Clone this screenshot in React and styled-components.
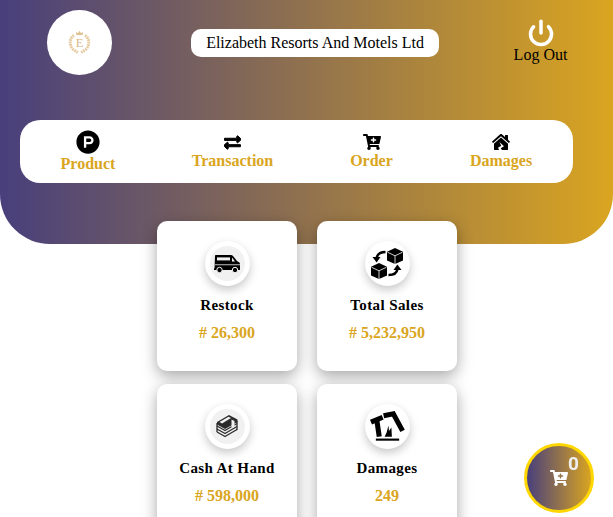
import React from 'react'
import styled, { createGlobalStyle } from 'styled-components'
import { FaProductHunt, FaExchangeAlt, FaCartPlus, FaHouseDamage } from 'react-icons/fa'
import { Power } from 'lucide-react'

const GlobalStyle = createGlobalStyle`
  html, body {
    margin: 0;
    height: 100%;
    overflow: hidden;
    background: #fff;
    font-family: "Liberation Serif", "Times New Roman", serif;
  }
`;

const VanIcon = () => (
  <svg width="26" height="18" viewBox="0 0 26 18">
    <path fill="#000" d="M1 1 C1 .4 1.4 0 2 0 H17 C17.8 0 18.4.3 19 .9 L23 6 L25 7.2 C25.7 7.7 26 8.3 26 9 V14 H.5 Z" />
    <rect x="3" y="2.4" width="13" height="3" fill="#f1f1f1" />
    <path fill="#f1f1f1" d="M18 2.6 L21 6.6 H18 Z" />
    <rect x="1" y="9.4" width="25" height=".8" fill="#f1f1f1" />
    <rect x="0" y="13.4" width="26" height="1.6" fill="#000" />
    <circle cx="5.5" cy="15" r="2.7" fill="#000" stroke="#f1f1f1" strokeWidth="1" />
    <circle cx="21" cy="15" r="2.7" fill="#000" stroke="#f1f1f1" strokeWidth="1" />
  </svg>
)

const Cube = ({ x, y }) => (
  <g transform={`translate(${x} ${y})`}>
    <path fill="#000" d="M8 0 L16 3.8 V12.6 L8 16 L0 12.6 V3.8 Z" />
    <path fill="none" stroke="#fff" strokeWidth=".8" d="M.5 4.2 L8 7.8 L15.5 4.2 M8 7.8 V16" />
  </g>
)

const CubesIcon = () => (
  <svg width="32" height="31" viewBox="0 0 32 31">
    <Cube x={16} y={0} />
    <Cube x={0} y={15} />
    <path fill="none" stroke="#000" strokeWidth="2.4" d="M14.5 4 C9 4 6 7 5.5 10.5" />
    <path fill="#000" d="M1.5 9 H9.5 L5.6 14.5 Z" />
    <path fill="none" stroke="#000" strokeWidth="2.4" d="M17.5 27 C23 27 26 24.5 26.5 21" />
    <path fill="#000" d="M22.5 22 H30.5 L26.4 16.5 Z" />
  </svg>
)

const CashIcon = () => (
  <svg width="22" height="23" viewBox="0 0 22 23">
    <g fill="none" stroke="#2b2b2b" strokeWidth="1.3" strokeLinejoin="round">
      <path d="M1 11 L9 15.5 L21 8.5" />
      <path d="M1 14 L9 18.5 L21 11.5" />
      <path d="M1 17 L9 21.5 L21 14.5" />
      <path d="M1 8 V17 M21 6 V15" />
    </g>
    <path fill="#2b2b2b" d="M1 7 L13 0 L21.5 4.5 V7 L9 14 L1 9.5 Z" />
    <path fill="#f1f1f1" d="M3.5 7 L12.5 1.8 L15 3.1 L6 8.4 Z" />
    <path fill="#f1f1f1" d="M15.5 4.5 L18.5 6.1 V11.5 L15.5 13.3 Z" />
  </svg>
)

const BrokenHouseIcon = () => (
  <svg width="36" height="31" viewBox="0 0 36 31">
    <g fill="none" stroke="#000" strokeWidth="5.2">
      <path d="M1 11 L13 6" />
      <path d="M7 9 L9.5 26" />
      <path d="M14 4.5 L24 2.5 L33.5 20" />
    </g>
    <path fill="#000" d="M15 26 L17 22 L19 14.5 L19.5 20 L22 16.5 L22.5 26 Z" />
    <path fill="none" stroke="#000" strokeWidth="2.2" d="M6 29 H30" />
  </svg>
)

const Crest = () => (
  <CrestSvg viewBox="0 0 30 30" width="25" height="25">
    <path fill="#dfc08f" d="M11 6 L11 2.5 L13.2 4 L15 1 L16.8 4 L19 2.5 L19 6 Z" />
    <g fill="none" stroke="#e5ca9f" strokeWidth="3.4" strokeDasharray="2.2 .8">
      <path d="M8.5 6.5 C3 9.5 2 18 7.5 23.5 L13 27" />
      <path d="M21.5 6.5 C27 9.5 28 18 22.5 23.5 L17 27" />
    </g>
    <text x="15" y="20" textAnchor="middle" fontSize="15" fill="#d9b884" fontFamily="Liberation Serif">E</text>
  </CrestSvg>
)

const tabs = [
  { label: 'Product', icon: <FaProductHunt size={24} />, big: true },
  { label: 'Transaction', icon: <FaExchangeAlt size={17} stroke="#000" strokeWidth={30} /> },
  { label: 'Order', icon: <FaCartPlus size={18} /> },
  { label: 'Damages', icon: <FaHouseDamage size={18} /> },
]

const stats = [
  { title: 'Restock', value: '# 26,300', icon: <VanIcon />, grey: true },
  { title: 'Total Sales', value: '# 5,232,950', icon: <CubesIcon /> },
  { title: 'Cash At Hand', value: '# 598,000', icon: <CashIcon />, grey: true },
  { title: 'Damages', value: '249', icon: <BrokenHouseIcon /> },
]

function App() {
  return (
    <Page>
      <GlobalStyle />
      <Header>
        <TopRow>
          <Logo><Crest /></Logo>
          <Title>Elizabeth Resorts And Motels Ltd</Title>
          <LogOut>
            <Power size={28} color="#fff" strokeWidth={3} />
            <span>Log Out</span>
          </LogOut>
        </TopRow>
        <Tabs>
          {tabs.map((tab) => (
            <Tab key={tab.label} $big={tab.big}>
              <TabIcon $big={tab.big}>{tab.icon}</TabIcon>
              <TabLabel>{tab.label}</TabLabel>
            </Tab>
          ))}
        </Tabs>
      </Header>

      <Cards>
        {stats.map((stat) => (
          <Card key={stat.title}>
            <IconCircle>
              <IconInner $grey={stat.grey}>{stat.icon}</IconInner>
            </IconCircle>
            <CardTitle>{stat.title}</CardTitle>
            <CardValue>{stat.value}</CardValue>
          </Card>
        ))}
      </Cards>

      <CartButton>
        <FaCartPlus size={18} color="#fff" />
        <CartCount>0</CartCount>
      </CartButton>
    </Page>
  )
}

export default App

const Page = styled.div`
  width: 613px;
`;

const Header = styled.header`
  height: 244px;
  box-sizing: border-box;
  padding: 10px 40px 0 20px;
  background: linear-gradient(90deg, #483f7c 0%, #daa520 100%);
  border-radius: 0 0 50px 50px;
`;

const TopRow = styled.div`
  display: grid;
  grid-template-columns: 171px 248px 1fr;
  align-items: start;
  height: 110px;
`;

const Logo = styled.div`
  width: 65px;
  height: 65px;
  margin-left: 27px;
  border-radius: 50%;
  background: #fff;
  display: flex;
  align-items: center;
  justify-content: center;
`;

const CrestSvg = styled.svg`
  display: block;
`;

const Title = styled.div`
  margin-top: 19px;
  height: 28px;
  line-height: 28px;
  text-align: center;
  background: #fff;
  border-radius: 10px;
  font-size: 16px;
  color: #000;
`;

const LogOut = styled.div`
  display: flex;
  flex-direction: column;
  align-items: center;
  padding: 9px 0 0 69px;
  color: #000;
  font-size: 16px;
  line-height: 18px;
  white-space: nowrap;

  svg {
    display: block;
    margin-bottom: -1px;
  }
`;

const Tabs = styled.nav`
  height: 63px;
  background: #fff;
  border-radius: 20px;
  display: grid;
  grid-template-columns: 136px 153px 125px 134px;
  align-items: start;
`;

const Tab = styled.div`
  display: flex;
  flex-direction: column;
  align-items: center;
  padding-top: ${(p) => (p.$big ? '10px' : '13px')};
`;

const TabIcon = styled.div`
  height: ${(p) => (p.$big ? '24px' : '18px')};
  display: flex;
  align-items: center;
  color: #000;
`;

const TabLabel = styled.div`
  font-size: 16px;
  line-height: 18px;
  margin-top: 1px;
  font-weight: 700;
  color: #daa520;
  white-space: nowrap;
`;

const Cards = styled.section`
  display: grid;
  grid-template-columns: 140px 140px;
  column-gap: 20px;
  row-gap: 13px;
  margin: -23px 0 0 157px;
`;

const Card = styled.div`
  height: 150px;
  box-sizing: border-box;
  padding-top: 20px;
  background: #fff;
  border-radius: 10px;
  box-shadow: 0 5px 15px rgba(0, 0, 0, 0.35);
  display: flex;
  flex-direction: column;
  align-items: center;
`;

const IconCircle = styled.div`
  width: 45px;
  height: 45px;
  border-radius: 50%;
  background: #fff;
  box-shadow: 0 4px 10px rgba(0, 0, 0, 0.22);
  display: flex;
  align-items: center;
  justify-content: center;
`;

const IconInner = styled.div`
  width: 35px;
  height: 35px;
  border-radius: 50%;
  background: ${(p) => (p.$grey ? '#f1f1f1' : '#fff')};
  display: flex;
  align-items: center;
  justify-content: center;
`;

const CardTitle = styled.div`
  margin-top: 10px;
  font-size: 15px;
  line-height: 18px;
  font-weight: 700;
  letter-spacing: 0.4px;
  color: #000;
`;

const CardValue = styled.div`
  margin-top: 10px;
  font-size: 16px;
  line-height: 18px;
  font-weight: 700;
  color: #daa520;
`;

const CartButton = styled.div`
  position: fixed;
  left: 524px;
  top: 443px;
  width: 70px;
  height: 70px;
  box-sizing: border-box;
  border: 3px solid #ffd700;
  border-radius: 50%;
  background: linear-gradient(90deg, #483f7c 0%, #daa520 100%);
  display: flex;
  align-items: center;
  justify-content: center;
  padding-bottom: 1px;
`;

const CartCount = styled.span`
  position: absolute;
  left: 41px;
  top: 8px;
  font-family: Roboto, "Liberation Sans", sans-serif;
  font-size: 19px;
  line-height: 20px;
  font-weight: 700;
  color: #efefef;
`;
